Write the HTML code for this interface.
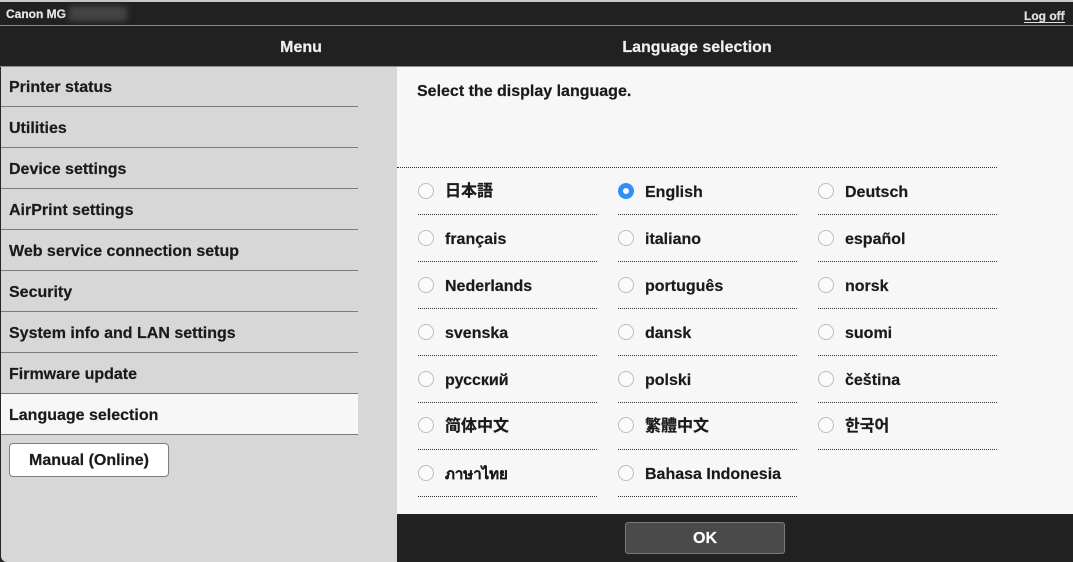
<!DOCTYPE html>
<html><head><meta charset="utf-8"><style>
html,body{margin:0;padding:0;background:#fff}
#p{position:relative;width:1073px;height:562px;overflow:hidden;background:#fff;font-family:"Liberation Sans","Noto Sans CJK JP",sans-serif;font-weight:bold;color:#1a1a1a;-webkit-text-stroke:.2px currentColor}
#p div,#p a{position:absolute;white-space:nowrap}
.m{left:9px;font-size:16px;line-height:20px}
.l{left:1px;width:357px;height:1px;background:#7c7c7c}
.r{width:14px;height:14px;border:1px solid #bdbdbd;border-radius:50%;background:#fbfbfb}
.t{font-size:16px;line-height:20px}
.d{width:179px;height:0;border-top:1px dotted #333}
</style></head><body><div id="p">
<div style="left:0;top:0;width:1073px;height:2px;background:#c9c9c9"></div>
<div style="left:0;top:2px;width:1073px;height:64px;background:#212121"></div>
<div style="left:0;top:25px;width:1073px;height:1px;background:#8a8a8a"></div>
<div style="left:0;top:66px;width:1073px;height:1px;background:#8f8f8f"></div>
<div style="left:6px;top:7px;font-size:12px;line-height:14px;color:#e6e6e6">Canon MG</div>
<div style="left:69px;top:6px;width:58px;height:15px;background:#444;filter:blur(3px)"></div>
<a style="left:1024px;top:10px;font-size:12px;line-height:12px;color:#e0e0e0;border-bottom:1px solid #e0e0e0">Log off</a>
<div style="left:200px;width:202px;text-align:center;top:38px;font-size:16px;line-height:20px;color:#f0f0f0">Menu</div>
<div style="left:497px;width:400px;text-align:center;top:38px;font-size:16px;line-height:20px;color:#f0f0f0">Language selection</div>

<div style="left:0;top:67px;width:397px;height:495px;background:#262626"></div>
<div style="left:1px;top:67px;width:396px;height:495px;background:#d7d7d7;border-bottom-left-radius:6px"></div>
<div style="left:397px;top:67px;width:676px;height:447px;background:#f7f7f7"></div>
<div style="left:397px;top:514px;width:676px;height:48px;background:#212121"></div>

<div style="left:1px;top:393px;width:357px;height:41px;background:#f7f7f7"></div>
<div class="m" style="top:78px">Printer status</div><div class="l" style="top:106px"></div>
<div class="m" style="top:119px">Utilities</div><div class="l" style="top:147px"></div>
<div class="m" style="top:160px">Device settings</div><div class="l" style="top:188px"></div>
<div class="m" style="top:201px">AirPrint settings</div><div class="l" style="top:229px"></div>
<div class="m" style="top:242px">Web service connection setup</div><div class="l" style="top:270px"></div>
<div class="m" style="top:283px">Security</div><div class="l" style="top:311px"></div>
<div class="m" style="top:324px">System info and LAN settings</div><div class="l" style="top:352px"></div>
<div class="m" style="top:365px">Firmware update</div><div class="l" style="top:393px"></div>
<div class="m" style="top:406px">Language selection</div><div class="l" style="top:434px"></div>
<div style="left:9px;top:443px;width:158px;height:32px;border:1px solid #7e7e7e;border-radius:4px;background:#fff;text-align:center;font-size:16px;line-height:34px">Manual (Online)</div>

<div style="left:417px;top:82px;font-size:16px;line-height:20px">Select the display language.</div>
<div style="left:397px;top:167px;width:600px;height:0;border-top:1px dotted #333"></div>

<div class="r" style="left:418px;top:183px"></div><div class="t" style="left:445px;top:182px">日本語</div><div class="d" style="left:418px;top:214px"></div>
<div class="r" style="left:618px;top:183px;width:6px;height:6px;border:5px solid #3090f8"></div><div class="t" style="left:645px;top:183px">English</div><div class="d" style="left:618px;top:214px"></div>
<div class="r" style="left:818px;top:183px"></div><div class="t" style="left:845px;top:183px">Deutsch</div><div class="d" style="left:818px;top:214px"></div>

<div class="r" style="left:418px;top:230px"></div><div class="t" style="left:445px;top:230px">français</div><div class="d" style="left:418px;top:261px"></div>
<div class="r" style="left:618px;top:230px"></div><div class="t" style="left:645px;top:230px">italiano</div><div class="d" style="left:618px;top:261px"></div>
<div class="r" style="left:818px;top:230px"></div><div class="t" style="left:845px;top:230px">español</div><div class="d" style="left:818px;top:261px"></div>

<div class="r" style="left:418px;top:277px"></div><div class="t" style="left:445px;top:277px">Nederlands</div><div class="d" style="left:418px;top:308px"></div>
<div class="r" style="left:618px;top:277px"></div><div class="t" style="left:645px;top:277px">português</div><div class="d" style="left:618px;top:308px"></div>
<div class="r" style="left:818px;top:277px"></div><div class="t" style="left:845px;top:277px">norsk</div><div class="d" style="left:818px;top:308px"></div>

<div class="r" style="left:418px;top:324px"></div><div class="t" style="left:445px;top:324px">svenska</div><div class="d" style="left:418px;top:355px"></div>
<div class="r" style="left:618px;top:324px"></div><div class="t" style="left:645px;top:324px">dansk</div><div class="d" style="left:618px;top:355px"></div>
<div class="r" style="left:818px;top:324px"></div><div class="t" style="left:845px;top:324px">suomi</div><div class="d" style="left:818px;top:355px"></div>

<div class="r" style="left:418px;top:371px"></div><div class="t" style="left:445px;top:371px">русский</div><div class="d" style="left:418px;top:402px"></div>
<div class="r" style="left:618px;top:371px"></div><div class="t" style="left:645px;top:371px">polski</div><div class="d" style="left:618px;top:402px"></div>
<div class="r" style="left:818px;top:371px"></div><div class="t" style="left:845px;top:371px">čeština</div><div class="d" style="left:818px;top:402px"></div>

<div class="r" style="left:418px;top:417px"></div><div class="t" style="left:445px;top:417px">简体中文</div><div class="d" style="left:418px;top:449px"></div>
<div class="r" style="left:618px;top:417px"></div><div class="t" style="left:645px;top:417px;font-family:'Liberation Sans','Noto Sans CJK TC',sans-serif">繁體中文</div><div class="d" style="left:618px;top:449px"></div>
<div class="r" style="left:818px;top:417px"></div><div class="t" style="left:845px;top:417px;font-family:'Liberation Sans','Noto Sans CJK KR',sans-serif">한국어</div><div class="d" style="left:818px;top:449px"></div>

<div class="r" style="left:418px;top:465px"></div><div class="t" style="left:445px;top:465px;font-size:15px">ภาษาไทย</div><div class="d" style="left:418px;top:496px"></div>
<div class="r" style="left:618px;top:465px"></div><div class="t" style="left:645px;top:465px">Bahasa Indonesia</div><div class="d" style="left:618px;top:496px"></div>

<div style="left:625px;top:522px;width:158px;height:30px;border:1px solid #7a7a7a;border-radius:3px;background:#4a4a4a;color:#fff;text-align:center;font-size:16px;line-height:32px">OK</div>
</div></body></html>
